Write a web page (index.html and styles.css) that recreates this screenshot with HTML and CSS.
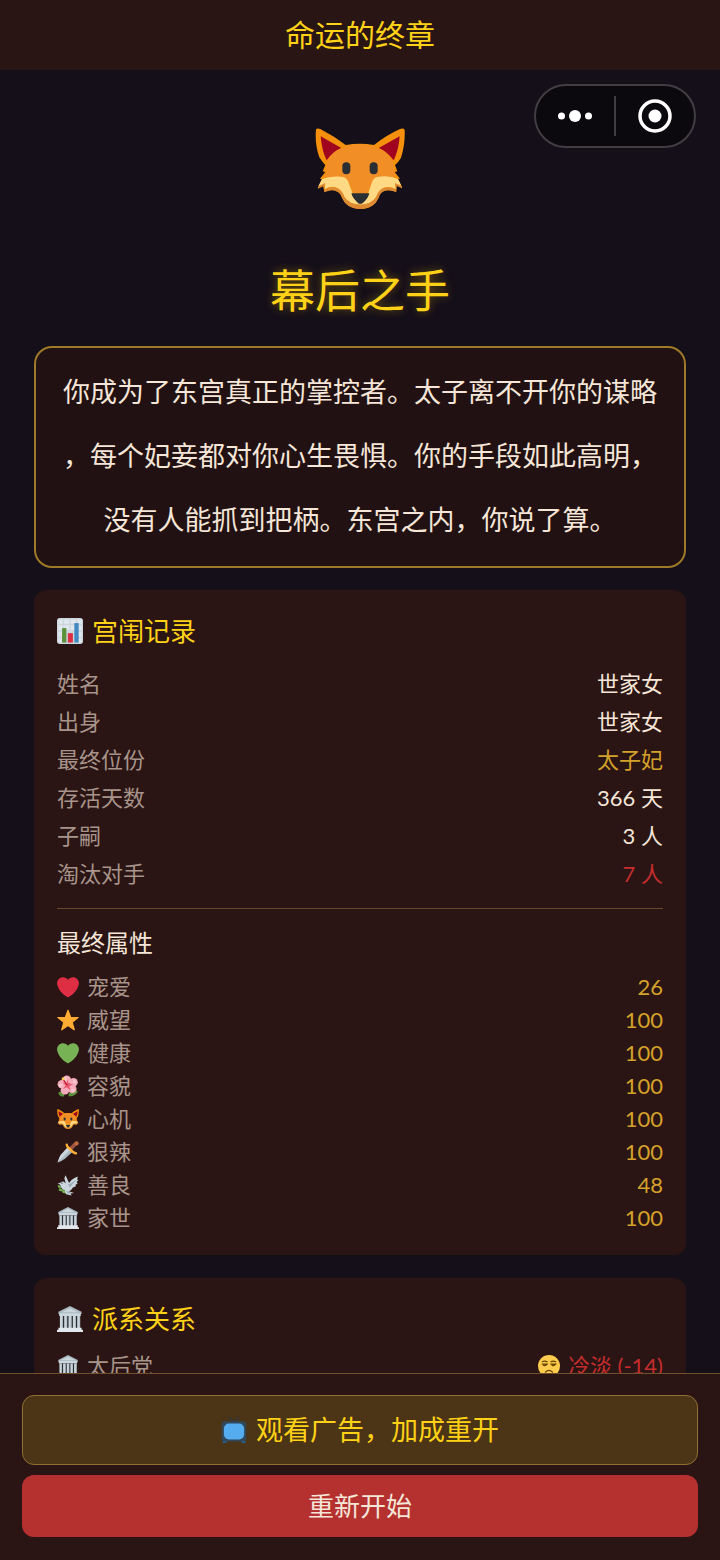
FILE: index.html
```html
<!DOCTYPE html>
<html lang="zh-CN">
<head>
    <meta charset="UTF-8">
    <meta name="viewport" content="width=device-width, initial-scale=1.0">
    <title>命运的终章</title>
    <link rel="stylesheet" href="styles.css">
</head>
<body>
    <!-- shared icons -->
    <svg class="sprite" aria-hidden="true">
        <symbol id="fox" viewBox="45 38 270 243">
            <path fill="#f4900c" d="M48 42Q52 37 61 41Q102 62 137 89Q180 82 222 89Q258 60 300 41Q311 37 314 44Q316 85 303 127L294 141L285 149L292 168L284 170L300 190L294 190L306 216L290 208L288 229Q270 222 252 226Q238 231 235 246Q226 269 205 277Q181 285 158 277Q136 269 126 246Q121 230 106 226Q93 221 73 229L70 211L54 218L66 192L60 190L76 170L68 168L76 149L68 140L58 126Q44 87 48 42Z"/>
            <path fill="#a0041e" d="M62 63L124 98Q96 110 80 135Q66 109 62 63ZM299 63L236 98Q263 110 281 135Q296 105 299 63Z"/>
            <path fill="#f18f26" d="M124 98Q180 76 236 98Q268 112 281 145L284 190L235 184Q220 188 216 204L181 265L146 204Q140 187 125 184L76 190L79 145Q93 111 124 98Z"/>
            <path fill="#ffd983" d="M66 191Q90 181 124 184Q142 185 146 203L160 240Q172 263 181 265Q191 263 203 238L215 203Q220 185 235 184Q270 180 294 191L304 211L285 204L288 221Q262 210 246 220Q234 227 229 244Q215 268 181 268Q147 268 132 244Q126 226 114 219Q99 209 74 221L75 204L55 213Z"/>
            <path fill="#dd8a32" d="M54 214L75 204L73 223Q98 210 114 220Q127 227 134 246Q149 268 181 268Q213 268 228 246Q235 226 248 219Q265 211 288 223L285 204L306 213L306 219L290 212L289 231Q265 221 252 228Q240 233 236 248Q222 281 181 281Q140 281 126 248Q121 232 108 227Q96 221 73 231L70 213L54 220Z"/>
            <path fill="#292f33" d="M154 234H208Q204 251 189 262Q181 269 173 262Q158 249 154 234Z"/>
            <rect x="127" y="141" width="24" height="36" rx="12" fill="#292f33"/>
            <rect x="209" y="141" width="24" height="36" rx="12" fill="#292f33"/>
        </symbol>
        <symbol id="heart" viewBox="0 0 36 36">
            <path d="M35.9 11.8C35.9 6.400 31.500 2 26.100 2 22.800 2 19.800 3.700 18 6.200 16.200 3.700 13.200 2 9.900 2 4.500 2 .1 6.400.1 11.800c0 .8.1 1.500.3 2.200C1.900 23.100 12 32.800 18 35c6-2.200 16.100-11.900 17.600-21 .2-.7.3-1.400.3-2.200z"/>
        </symbol>
        <symbol id="palace" viewBox="0 0 36 36">
            <path fill="#aab8c2" d="M18 0 2 8v3h32V8z"/>
            <path fill="#ccd6dd" d="M18 3 6 8.500h24zM3 10h30v4H3z"/>
            <path fill="#292f33" d="M6 14h24v16H6z"/>
            <path fill="#ccd6dd" d="M4 14h4v17H4zM10 14h4v17h-4zM16 14h4v17h-4zM22 14h4v17h-4zM28 14h4v17h-4z"/>
            <path fill="#aab8c2" d="M7 14h1v16H7zM13 14h1v16h-1zM19 14h1v16h-1zM25 14h1v16h-1zM31 14h1v16h-1z"/>
            <path fill="#e1e8ed" d="M2 30h32v3H2zM0 33h36v3H0z"/>
        </symbol>
    </svg>

    <header class="navbar">
        <h1>命运的终章</h1>
    </header>

    <div class="capsule">
        <button type="button" aria-label="更多">
            <svg width="34" height="12" viewBox="0 0 34 12" fill="#fff"><circle cx="3.500" cy="6" r="3.500"/><circle cx="17" cy="6" r="6"/><circle cx="30.500" cy="6" r="3.500"/></svg>
        </button>
        <span class="capsule-line"></span>
        <button type="button" aria-label="关闭">
            <svg width="34" height="34" viewBox="0 0 34 34"><circle cx="17" cy="17" r="15" fill="none" stroke="#fff" stroke-width="3.500"/><circle cx="17" cy="17" r="6.500" fill="#fff"/></svg>
        </button>
    </div>

    <main class="content">
        <svg class="hero"><use href="#fox"/></svg>
        <h2 class="ending">幕后之手</h2>
        <p class="story">你成为了东宫真正的掌控者。太子离不开你的谋略，每个妃妾都对你心生畏惧。你的手段如此高明，没有人能抓到把柄。东宫之内，你说了算。</p>

        <section class="card">
            <h3 class="card-title">
                <svg viewBox="0 0 36 36">
                    <rect width="36" height="36" rx="4" fill="#ccd6dd"/>
                    <path fill="#e1e8ed" d="M2 2h6v6H2zM10 2h7v6h-7zM19 2h7v6h-7zM28 2h6v6h-6zM2 10h6v7H2zM10 10h7v7h-7zM19 10h7v7h-7zM28 10h6v7h-6zM2 19h6v7H2zM28 19h6v7h-6zM2 28h6v6H2zM28 28h6v6h-6z"/>
                    <path fill="#5c913b" d="M7 14h6v20H7z"/>
                    <path fill="#dd2e44" d="M15 21h7v13h-7z"/>
                    <path fill="#4289c1" d="M24 7h6v27h-6z"/>
                </svg>
                宫闱记录
            </h3>
            <dl class="records">
                <div class="row"><dt>姓名</dt><dd>世家女</dd></div>
                <div class="row"><dt>出身</dt><dd>世家女</dd></div>
                <div class="row"><dt>最终位份</dt><dd class="gold">太子妃</dd></div>
                <div class="row"><dt>存活天数</dt><dd>366 天</dd></div>
                <div class="row"><dt>子嗣</dt><dd>3 人</dd></div>
                <div class="row"><dt>淘汰对手</dt><dd class="red">7 人</dd></div>
            </dl>
            <h4 class="sub-title">最终属性</h4>
            <dl class="attrs">
                <div class="row"><dt><svg fill="#dd2e44"><use href="#heart"/></svg>宠爱</dt><dd class="gold">26</dd></div>
                <div class="row"><dt><svg viewBox="0 0 36 36"><path fill="#ffac33" stroke="#ffac33" stroke-width="2" stroke-linejoin="round" d="m18 2 4.200 11.500L34.500 14l-9.700 7.600L28.200 34 18 26.800 7.800 34l3.400-12.400L1.500 14l12.300-.5z"/></svg>威望</dt><dd class="gold">100</dd></div>
                <div class="row"><dt><svg fill="#77b255"><use href="#heart"/></svg>健康</dt><dd class="gold">100</dd></div>
                <div class="row"><dt>
                    <svg viewBox="0 0 36 36">
                        <path fill="#5c913b" d="M2 29q5-4 11 0l-2 6q-7 1-9-6zM19 31q6-8 15-5-1 8-15 9z"/>
                        <g fill="#f4abba"><circle cx="16" cy="8" r="7"/><circle cx="27" cy="12" r="7"/><circle cx="25" cy="23" r="7"/><circle cx="13" cy="25" r="7"/><circle cx="8" cy="15" r="7"/></g>
                        <g fill="#f7c5cf"><circle cx="14" cy="6" r="3"/><circle cx="29" cy="11" r="3"/><circle cx="26" cy="25" r="3"/><circle cx="6" cy="17" r="3"/></g>
                        <path fill="#ea596e" d="m17 6 2 8 8 1-7 3 2 7-6-5-6 3 4-6-5-5 7 2z"/>
                        <path stroke="#be1931" stroke-width="2" d="m17 17-7-10"/>
                        <circle cx="10" cy="6" r="2.500" fill="#ffcc4d"/>
                    </svg>容貌</dt><dd class="gold">100</dd></div>
                <div class="row"><dt><svg><use href="#fox"/></svg>心机</dt><dd class="gold">100</dd></div>
                <div class="row"><dt>
                    <svg viewBox="0 0 36 36">
                        <path fill="#aab8c2" d="M18 10 6 23Q3 28 1 35q7-2 12-6l13-12z"/>
                        <path fill="#ccd6dd" d="M18 10 6 23Q3 28 1 35l21-21z"/>
                        <path stroke="#9f543f" stroke-width="6" stroke-linecap="round" d="m23 12 7-7"/>
                        <path fill="none" stroke="#ffac33" stroke-width="4" stroke-linecap="round" d="M16 6q0 3 3 5l6 6q3 3 6 3"/>
                        <circle cx="32" cy="4" r="3.500" fill="#be6c3c"/>
                    </svg>狠辣</dt><dd class="gold">100</dd></div>
                <div class="row"><dt>
                    <svg viewBox="0 0 36 36">
                        <path fill="#ccd6dd" d="M15 18 12 7l2-5 5 11 3 3z"/>
                        <path fill="#ccd6dd" d="M6 14q4-4 8 1l5 2q3-9 15-13l-1 5 2 1-3 3 2 2-4 3 1 2-5 2q-3 6-8 6l10 3-6 1 2 3-9-2-5-7q-5-5-5-9l-4-1z"/>
                        <path fill="#99aab5" d="m19 18 12-8-10 12zM15 28l8 2-4 3z"/>
                        <path fill="none" stroke="#5c913b" stroke-width="2" d="M2 20q3 6 11 7"/>
                        <path fill="#77b255" d="M1 18q5 0 6 5-5 0-6-5zM2 26q5-3 8 1-3 3-8-1zM8 28q5-2 6 3-5 2-6-3z"/>
                        <circle cx="8" cy="15" r="1" fill="#292f33"/>
                    </svg>善良</dt><dd class="gold">48</dd></div>
                <div class="row"><dt><svg><use href="#palace"/></svg>家世</dt><dd class="gold">100</dd></div>
            </dl>
        </section>

        <section class="card">
            <h3 class="card-title"><svg><use href="#palace"/></svg>派系关系</h3>
            <dl class="attrs">
                <div class="row">
                    <dt><svg><use href="#palace"/></svg>太后党</dt>
                    <dd class="red">
                        <svg viewBox="0 0 36 36">
                            <circle cx="18" cy="18" r="18" fill="#ffcc4d"/>
                            <path fill="none" stroke="#664500" stroke-width="2" stroke-linecap="round" d="M7 11q4-2 8 0M21 11q4-2 8 0M7 15h8q-2 3-6 2M21 15h8q-2 3-6 2M12 28q6-6 12 0"/>
                        </svg>冷淡 (-14)
                    </dd>
                </div>
            </dl>
        </section>
    </main>

    <footer class="actions">
        <button type="button" class="btn btn-ad">
            <svg viewBox="0 0 36 36">
                <path fill="none" stroke="#31373d" stroke-width="2" d="m11 0 7 7 7-7"/>
                <path fill="#226699" d="M3 32h6l-2 4H2zM27 32h6l1 4h-5z"/>
                <rect x="1" y="6" width="34" height="28" rx="5" fill="#31475a"/>
                <rect x="4" y="9" width="28" height="22" rx="7" fill="#55acee"/>
            </svg>
            观看广告，加成重开
        </button>
        <button type="button" class="btn btn-restart">重新开始</button>
    </footer>
</body>
</html>
```

FILE: styles.css
```css
* {
    box-sizing: border-box;
    margin: 0;
    padding: 0;
}
body {
    display: flex;
    flex-direction: column;
    height: 100vh;
    overflow: hidden;
    background: #150f19;
    color: #f5e6d8;
    font-family: Lato, "Noto Sans CJK SC", sans-serif;
    font-size: 22px;
}
h1, h2, h3, h4 {
    font-weight: normal;
}
.sprite {
    position: absolute;
    width: 0;
    height: 0;
}
.navbar {
    flex: none;
    padding-bottom: 2px;
    background: #2a1515;
    text-align: center;
}
.navbar h1 {
    font-size: 30px;
    line-height: 68px;
    color: #ffd217;
}

/* mini program capsule */
.capsule {
    position: fixed;
    top: 84px;
    right: 24px;
    display: flex;
    align-items: center;
    width: 162px;
    height: 64px;
    border: 2px solid #413d43;
    border-radius: 32px;
    background: #0b090d;
}
.capsule button {
    display: flex;
    flex: 1;
    justify-content: center;
    background: none;
    border: none;
}
.capsule-line {
    width: 2px;
    height: 40px;
    background: #413d43;
}

.content {
    flex: 1;
    min-height: 0;
    padding: 58px 34px 0;
    overflow-y: auto;
    scrollbar-width: none;
}
.hero {
    display: block;
    width: 90px;
    height: 81px;
    margin: 0 auto 49px;
}
.ending {
    margin-bottom: 22px;
    font-size: 45px;
    line-height: 66px;
    text-align: center;
    color: #ffd217;
    text-shadow: 0 0 8px rgba(255, 200, 0, 0.4);
}
.story {
    margin-bottom: 22px;
    padding: 12px 24px 14px;
    border: 2px solid #9c7a28;
    border-radius: 18px;
    background: #221112;
    font-size: 27px;
    line-height: 64px;
    text-align: center;
    line-break: anywhere;
}

.card {
    margin-bottom: 23px;
    padding: 22px 23px 21px;
    border-radius: 12px;
    background: #2a1514;
}
.card-title {
    display: flex;
    align-items: center;
    gap: 9px;
    margin-bottom: 11px;
    font-size: 26px;
    line-height: 38px;
    color: #ffd217;
}
.card-title svg,
.btn svg {
    width: 26px;
    height: 26px;
}
.records {
    padding: 4px 0 15px;
    border-bottom: 1px solid #664a2c;
    line-height: 38px;
}
.sub-title {
    margin: 16px 0 9px;
    font-size: 24px;
    line-height: 36px;
}
.attrs {
    line-height: 33px;
}
.row {
    display: flex;
    justify-content: space-between;
}
.row dt,
.row dd {
    display: flex;
    align-items: center;
    gap: 8px;
}
.row dt {
    color: #a8948a;
}
.row svg {
    width: 22px;
    height: 22px;
}
.row .gold {
    color: #d4a12a;
}
.row .red {
    color: #c62d2d;
}

.actions {
    display: flex;
    flex: none;
    flex-direction: column;
    gap: 10px;
    padding: 21px 22px 23px;
    border-top: 1px solid #6e502c;
    background: #2a1514;
}
.btn {
    display: flex;
    align-items: center;
    justify-content: center;
    gap: 9px;
    padding: 12px;
    border: none;
    border-radius: 12px;
    font-family: inherit;
    line-height: 38px;
}
.btn-ad {
    padding: 15px;
    border: 1px solid #8f6f34;
    background: #4c3416;
    font-size: 27px;
    color: #ffd217;
}
.btn-restart {
    background: #b43130;
    font-size: 26px;
    color: #f5e6d8;
}
```
